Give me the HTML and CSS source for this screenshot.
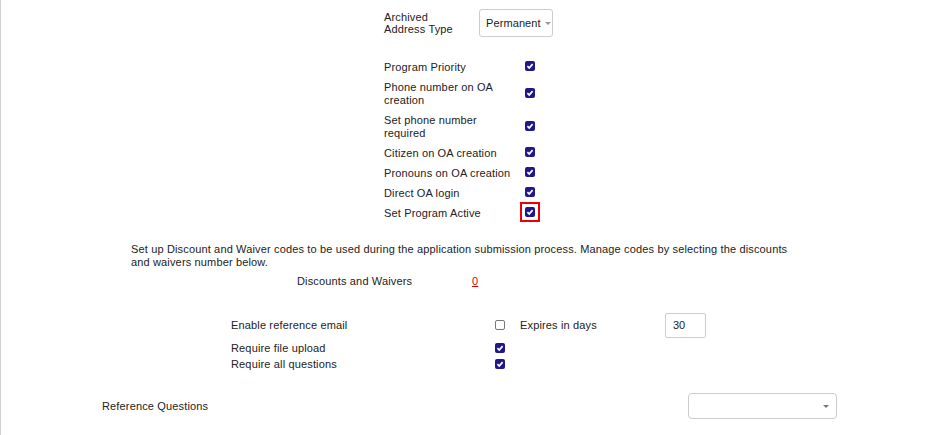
FILE: index.html
```html
<!DOCTYPE html>
<html>
<head>
<meta charset="utf-8">
<link rel="stylesheet" href="styles.css">
</head>
<body>
<div class="page">
  <section class="program">
    <div class="archived-row">
      <div class="archived-label">Archived Address Type</div>
      <button class="dropdown">Permanent <span class="caret"></span></button>
    </div>
    <div class="check-list">
      <div class="check-row"><div class="check-label">Program Priority</div><div class="check-cell"><span class="cb on"><svg viewBox="0 0 10 10"><path d="M2.4 5.2 L4.2 7 L7.6 3.1"/></svg></span></div></div>
      <div class="check-row"><div class="check-label">Phone number on OA creation</div><div class="check-cell"><span class="cb on"><svg viewBox="0 0 10 10"><path d="M2.4 5.2 L4.2 7 L7.6 3.1"/></svg></span></div></div>
      <div class="check-row"><div class="check-label">Set phone number required</div><div class="check-cell"><span class="cb on"><svg viewBox="0 0 10 10"><path d="M2.4 5.2 L4.2 7 L7.6 3.1"/></svg></span></div></div>
      <div class="check-row"><div class="check-label">Citizen on OA creation</div><div class="check-cell"><span class="cb on"><svg viewBox="0 0 10 10"><path d="M2.4 5.2 L4.2 7 L7.6 3.1"/></svg></span></div></div>
      <div class="check-row"><div class="check-label">Pronouns on OA creation</div><div class="check-cell"><span class="cb on"><svg viewBox="0 0 10 10"><path d="M2.4 5.2 L4.2 7 L7.6 3.1"/></svg></span></div></div>
      <div class="check-row"><div class="check-label">Direct OA login</div><div class="check-cell"><span class="cb on"><svg viewBox="0 0 10 10"><path d="M2.4 5.2 L4.2 7 L7.6 3.1"/></svg></span></div></div>
      <div class="check-row"><div class="check-label">Set Program Active</div><div class="check-cell highlight"><span class="cb on"><svg viewBox="0 0 10 10"><path d="M2.4 5.2 L4.2 7 L7.6 3.1"/></svg></span></div></div>
    </div>
  </section>

  <section class="discounts">
    <p class="intro">Set up Discount and Waiver codes to be used during the application submission process. Manage codes by selecting the discounts and waivers number below.</p>
    <div class="discount-row">
      <span class="discount-label">Discounts and Waivers</span>
      <a class="count" href="#">0</a>
    </div>
  </section>

  <section class="reference">
    <div class="ref-row first">
      <span class="ref-label">Enable reference email</span>
      <span class="cb off"></span>
      <span class="expires-label">Expires in days</span>
      <input class="days" type="text" value="30">
    </div>
    <div class="ref-row">
      <span class="ref-label">Require file upload</span>
      <span class="cb on"><svg viewBox="0 0 10 10"><path d="M2.4 5.2 L4.2 7 L7.6 3.1"/></svg></span>
    </div>
    <div class="ref-row">
      <span class="ref-label">Require all questions</span>
      <span class="cb on"><svg viewBox="0 0 10 10"><path d="M2.4 5.2 L4.2 7 L7.6 3.1"/></svg></span>
    </div>
  </section>

  <section class="questions">
    <span class="questions-label">Reference Questions</span>
    <div class="select-box"><span class="caret dark"></span></div>
  </section>
</div>
</body>
</html>
```
FILE: styles.css
```css
* { box-sizing: border-box; }
html, body { margin: 0; padding: 0; background: #fff; }
body {
  font-family: "Liberation Sans", Arial, sans-serif;
  font-size: 11px;
  letter-spacing: 0.15px;
  color: #222;
}
.page {
  border-left: 1px solid #cfcfcf;
  min-height: 435px;
  overflow: hidden;
}

/* program settings */
.program {
  padding: 9px 0 0 383px;
}
.archived-row {
  display: flex;
  align-items: center;
  height: 28px;
}
.archived-label {
  width: 84px;
  margin-right: 11px;
  line-height: 12px;
}
.dropdown {
  height: 28px;
  width: 74px;
  padding: 0 0 0 6px;
  display: flex;
  align-items: center;
  gap: 4px;
  border: 1px solid #ccc;
  border-radius: 3px;
  background: #fff;
  font-family: inherit;
  font-size: 11px;
  letter-spacing: 0.1px;
  color: #222;
}
.caret {
  display: inline-block;
  width: 0; height: 0;
  border-left: 3px solid transparent;
  border-right: 3px solid transparent;
  border-top: 3px solid #999;
}
.caret.dark { border-top-color: #777; border-left-width: 3.5px; border-right-width: 3.5px; }

.check-list {
  margin-top: 20px;
  display: flex;
  flex-direction: column;
}
.check-row {
  display: flex;
  align-items: center;
  padding: 3.5px 0;
  min-height: 20px;
}
.check-label {
  width: 130px;
  line-height: 13px;
}
.check-cell {
  margin-left: 6px;
  margin-bottom: 2px;
  width: 20px;
  height: 11px;
  display: flex;
  align-items: center;
  justify-content: center;
}
.check-cell.highlight {
  height: 20px;
  margin-top: -5px;
  margin-bottom: -1px;
  border: 2px solid #e8000b;
}

.cb {
  display: inline-block;
  width: 10px;
  height: 10px;
  border-radius: 2px;
  flex: none;
}
.cb svg { display: block; width: 10px; height: 10px; }
.cb.on { background: #20188a; }
.cb.on path { fill: none; stroke: #fff; stroke-width: 1.7; }
.cb.off { background: #fff; border: 1px solid #777; }

/* discounts */
.discounts {
  padding: 19px 0 0 130px;
}
.intro {
  margin: 0;
  width: 665px;
  line-height: 13px;
}
.discount-row {
  display: flex;
  margin: 6px 0 0 166px;
  line-height: 13px;
}
.discount-label { width: 175px; }
.count { color: #d0000a; text-decoration: underline; }

/* reference */
.reference {
  padding: 24px 0 0 230px;
}
.ref-row {
  display: flex;
  align-items: center;
  height: 16px;
}
.ref-row.first { height: 26px; margin-bottom: 2px; }
.ref-label { width: 264px; }
.expires-label { margin-left: 15px; width: 145px; }
.days {
  width: 41px;
  height: 25px;
  border: 1px solid #ccc;
  border-radius: 2px;
  padding: 0 7px;
  font-family: inherit;
  font-size: 11px;
  color: #222;
}

/* questions */
.questions {
  display: flex;
  align-items: center;
  padding: 21px 0 0 101px;
}
.questions-label { width: 586px; }
.select-box {
  width: 149px;
  height: 26px;
  border: 1px solid #ccc;
  border-radius: 4px;
  display: flex;
  align-items: center;
  justify-content: flex-end;
  padding-right: 7px;
}
```
